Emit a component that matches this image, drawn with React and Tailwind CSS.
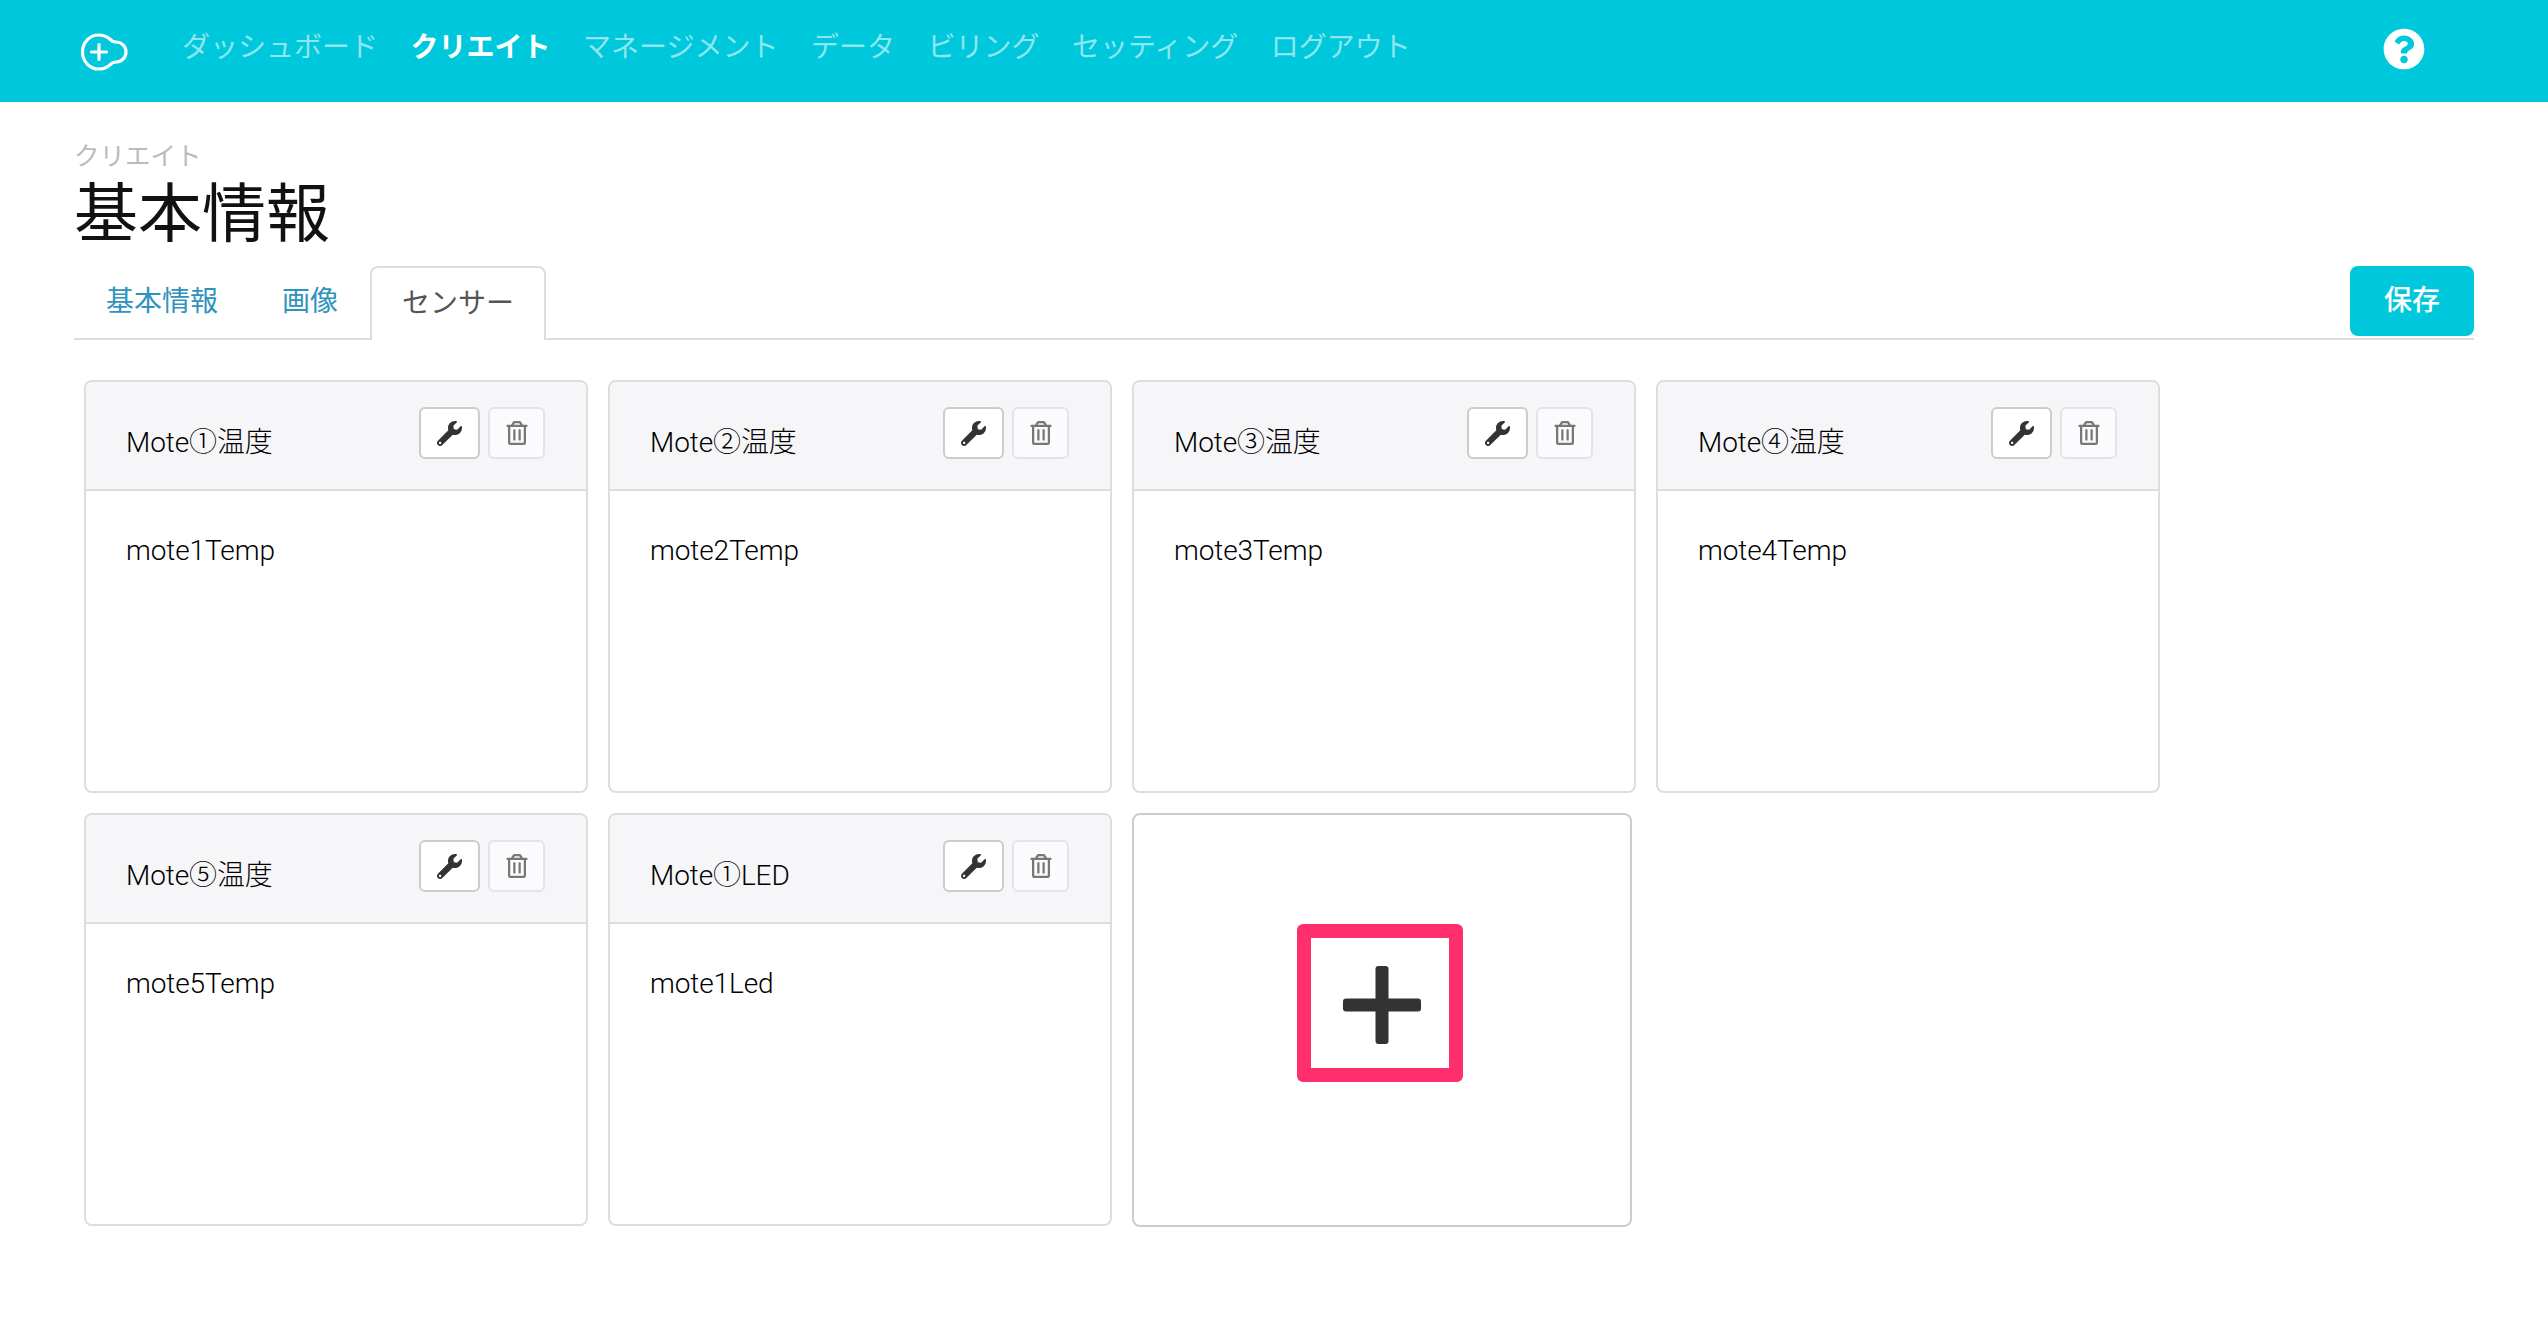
import React from 'react';
import { FaWrench, FaRegTrashAlt, FaQuestionCircle } from 'react-icons/fa';

const navItems = ['ダッシュボード', 'クリエイト', 'マネージメント', 'データ', 'ビリング', 'セッティング', 'ログアウト'];

const sensors = [
  { title: 'Mote①温度', key: 'mote1Temp' },
  { title: 'Mote②温度', key: 'mote2Temp' },
  { title: 'Mote③温度', key: 'mote3Temp' },
  { title: 'Mote④温度', key: 'mote4Temp' },
  { title: 'Mote⑤温度', key: 'mote5Temp' },
  { title: 'Mote①LED', key: 'mote1Led' },
];

const Logo = () => (
  <svg width="48" height="38" viewBox="0 0 48 38" fill="none" stroke="white" strokeWidth="3.2" strokeLinecap="round">
    <path d="M29 5.300C26 3 23 2 19 2C9.600 2 2.500 9.600 2.500 19C2.500 28.400 9.600 36 19 36C23 36 26 35 29 32.700C31 30.500 33 29 36 29C41.500 29 46 24.500 46 19C46 13.500 41.500 9 36 9C33 9 31 7.500 29 5.300Z" />
    <path d="M19 11.500V26.500M11.500 19H26.500" />
  </svg>
);

const SensorCard = ({ title, name }) => (
  <div className="h-[413px] border-2 border-[#dddddd] rounded-lg overflow-hidden bg-white">
    <div className="h-[109px] bg-[#f6f6f8] border-b-2 border-[#dddddd] flex justify-between pl-[40px] pr-[41px]">
      <span className="mt-[43px] text-[28px] leading-[36px] text-black tracking-[-0.1px] font-light">{title}</span>
      <div className="flex gap-2 mt-[25px] h-[52px]">
        <button className="w-[61px] h-[52px] bg-white border-2 border-[#cccccc] rounded-md flex items-center justify-center text-[#333333]">
          <FaWrench size={25} />
        </button>
        <button className="w-[57px] h-[52px] bg-[#fbfbfd] border-2 border-[#e4e4e6] rounded-md flex items-center justify-center text-[#777777]">
          <FaRegTrashAlt size={24} />
        </button>
      </div>
    </div>
    <div className="pl-[40px] pt-[42px] text-[28px] leading-[36px] text-black tracking-[-0.1px] font-light">{name}</div>
  </div>
);

export default function App() {
  return (
    <div className="min-h-screen bg-white font-['Roboto','Noto_Sans_CJK_JP',sans-serif]">
      <header className="h-[102px] bg-[#00c8dc] flex items-center pl-[80px] pr-[123px]">
        <div className="mt-[2px]"><Logo /></div>
        <nav className="flex gap-[32.5px] ml-[54px] mb-[6px] text-[28px] leading-[36px]">
          {navItems.map((item) => (
            <span key={item} className={item === 'クリエイト' ? 'text-white font-bold' : 'text-[#8ee6ef]'}>{item}</span>
          ))}
        </nav>
        <FaQuestionCircle size={42} className="ml-auto mb-[4px] text-white" />
      </header>

      <main className="px-[74px]">
        <div className="pt-[39px] text-[25.5px] leading-[30px] text-[#bbbbbb]">クリエイト</div>
        <h1 className="text-[64px] leading-[78px] text-[#111111] mt-[5px]">基本情報</h1>

        <div className="flex items-end justify-between border-b-2 border-[#dddddd] h-[74px] mt-[12px]">
          <div className="flex items-end h-[74px] text-[28px]">
            <a className="px-[32px] h-[72px] flex items-center text-[#2f93bd]">基本情報</a>
            <a className="px-[32px] h-[72px] flex items-center text-[#2f93bd]">画像</a>
            <a className="w-[176px] h-[74px] -mb-[2px] flex items-center justify-center bg-white border-2 border-b-0 border-[#dddddd] rounded-t-lg text-[#555555]">センサー</a>
          </div>
          <button className="w-[124px] h-[70px] mb-[2px] bg-[#00c8dc] rounded-lg text-white text-[28px] font-medium">保存</button>
        </div>

        <div className="grid grid-cols-[repeat(4,504px)] gap-x-[20px] gap-y-[20px] pl-[10px] mt-[40px]">
          {sensors.map((s) => (
            <SensorCard key={s.key} title={s.title} name={s.key} />
          ))}
          <div className="relative w-[500px] h-[414px] border-2 border-[#cccccc] rounded-lg flex items-center justify-center pb-[30px]">
            <svg width="78" height="78" viewBox="0 0 78 78" fill="#333333">
              <rect x="0" y="32.500" width="78" height="13" rx="3" />
              <rect x="32.500" y="0" width="13" height="78" rx="3" />
            </svg>
            <div className="absolute left-[163px] top-[109px] w-[166px] h-[158px] border-[14px] border-[#ff2f6e] rounded-md" />
          </div>
        </div>
      </main>
    </div>
  );
}
